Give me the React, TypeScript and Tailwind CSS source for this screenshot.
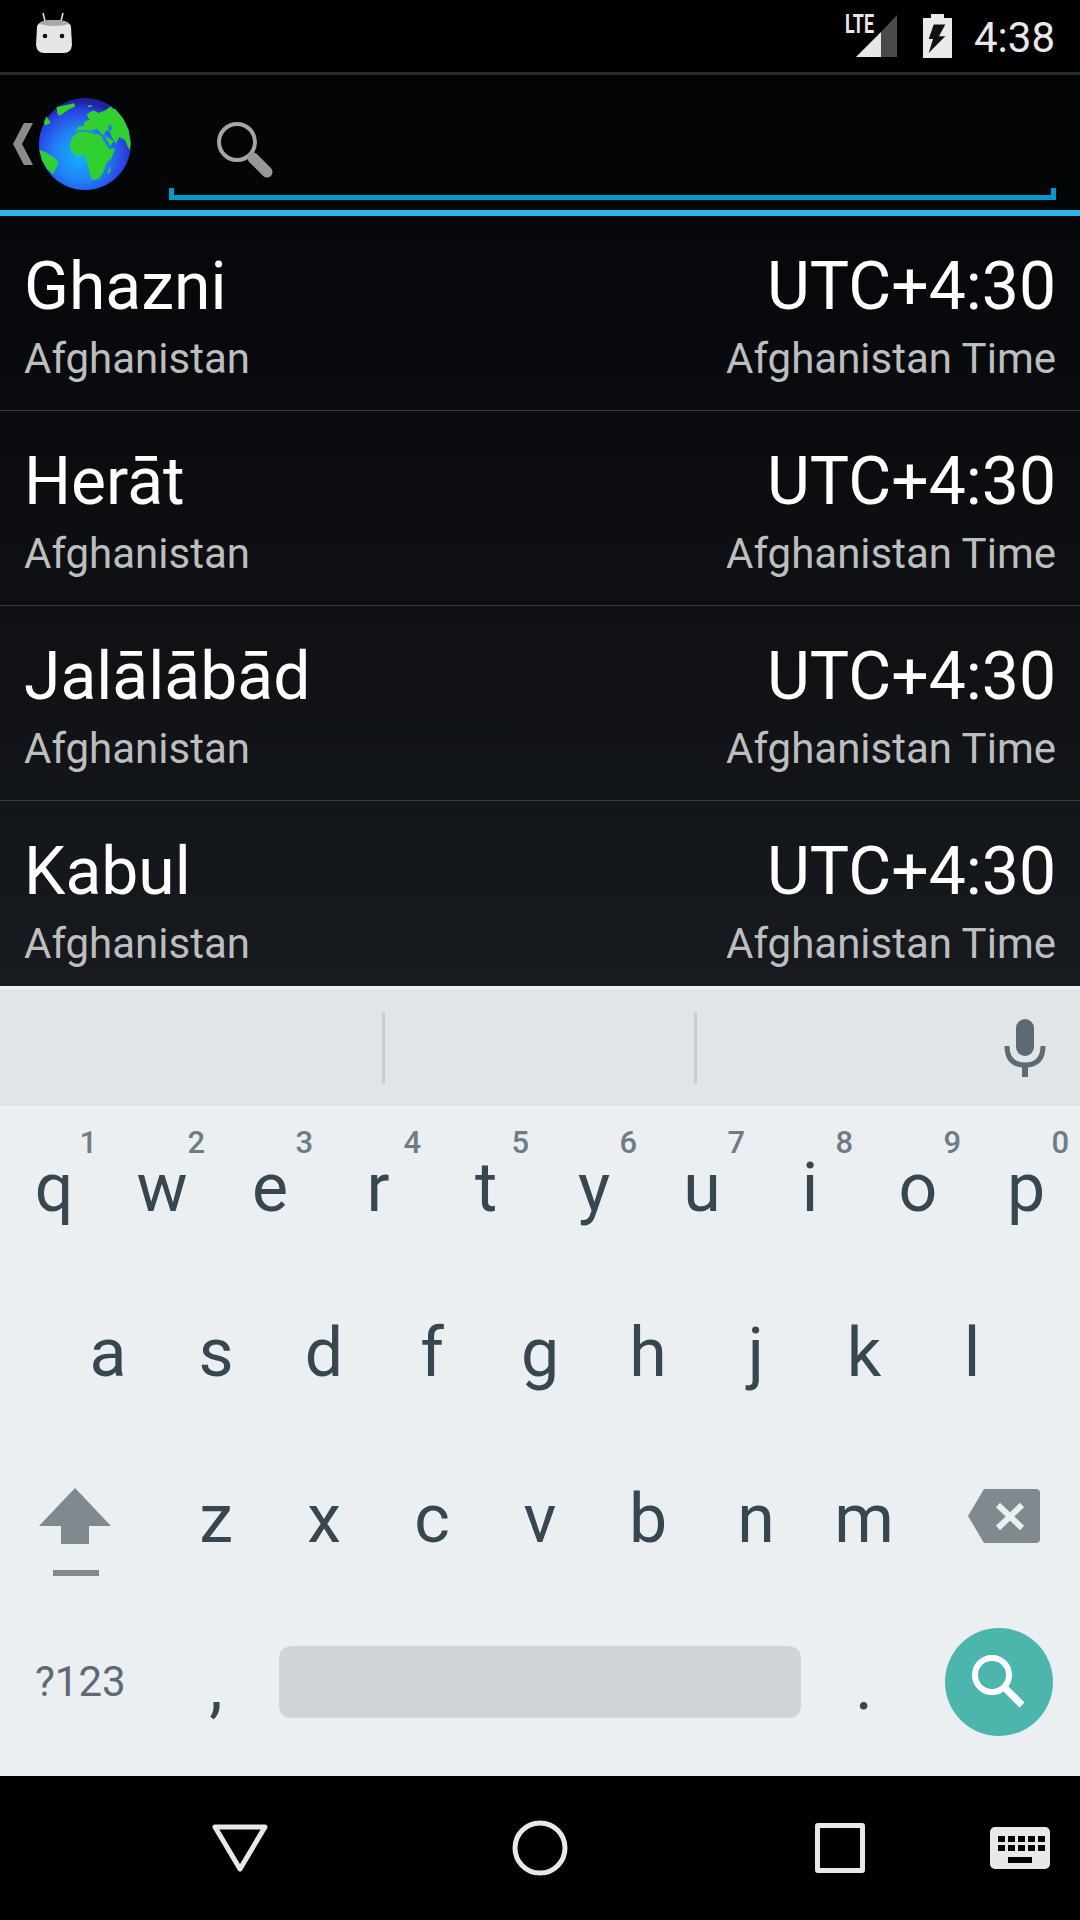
const sans = 'font-["Roboto",sans-serif]';

const cities = ['Ghazni', 'Herāt', 'Jalālābād', 'Kabul'];

const rowOne = [
  ['q', '1'],
  ['w', '2'],
  ['e', '3'],
  ['r', '4'],
  ['t', '5'],
  ['y', '6'],
  ['u', '7'],
  ['i', '8'],
  ['o', '9'],
  ['p', '0'],
];

function Key({ label, hint }: { label: string; hint?: string }) {
  return (
    <div className="relative flex w-[108px] items-center justify-center pb-[13px] text-[68px] leading-none text-[#37474f]">
      {hint && (
        <span className="absolute top-[14px] right-[11px] text-[31px] font-medium leading-none text-[#6f7c83]">{hint}</span>
      )}
      {label}
    </div>
  );
}

function Globe() {
  return (
    <svg viewBox="117 293 276 276" className="ml-[6px] h-[92px] w-[92px] shrink-0">
      <defs>
        <radialGradient id="sea" cx="45%" cy="62%" r="58%">
          <stop offset="0%" stopColor="#12b4ff" />
          <stop offset="50%" stopColor="#2080f5" />
          <stop offset="85%" stopColor="#2a40e0" />
          <stop offset="100%" stopColor="#2020a0" />
        </radialGradient>
      </defs>
      <circle cx="255" cy="431" r="138" fill="url(#sea)" />
      <g fill="#30d030">
        <path d="M170 320 L222 309 L226 318 L205 328 L180 346 L172 340 Z" />
        <path d="M132 364 L140 348 L152 368 L135 376 Z" />
        <path d="M262 316 L276 314 L274 320 L264 320 Z" />
        <path d="M318 328 L332 318 L340 326 L326 332 Z" />
        <path d="M228 392 L236 378 L250 378 L255 362 L268 360 L260 342 L280 330 L295 338 L320 328 L345 325 L370 355 L386 390 L392 430 L388 450 L375 420 L358 410 L348 430 L335 410 L330 395 L322 388 L312 400 L330 438 L342 422 L304 400 L290 385 L270 392 L250 388 Z" />
        <path d="M209 438 L216 412 L234 396 L262 394 L280 400 L302 404 L310 420 L328 446 L346 444 L334 474 L318 490 L310 516 L296 536 L276 538 L268 516 L262 486 L254 464 L232 466 L216 456 Z" />
        <path d="M322 520 L330 496 L332 512 L326 520 Z" />
        <path d="M118 448 L136 456 L160 470 L176 484 L168 504 L160 522 L142 506 L126 480 Z" />
      </g>
      <ellipse cx="330" cy="382" rx="5" ry="9" fill="#2a70f0" />
    </svg>
  );
}

function Row({ city }: { city: string }) {
  return (
    <div className="flex h-[195px] shrink-0 items-start justify-between border-b border-[#3a3d40] pl-[24px] pr-[24px] pt-[39px] last:border-b-0">
      <div className="flex flex-col">
        <span className="text-[66px] leading-[64px] text-white">{city}</span>
        <span className="mt-[16px] text-[42px] leading-[48px] text-[#bdbebf]">Afghanistan</span>
      </div>
      <div className="flex flex-col items-end">
        <span className="text-[66px] leading-[64px] text-white">UTC+4:30</span>
        <span className="mt-[16px] text-[42px] leading-[48px] text-[#bdbebf]">Afghanistan Time</span>
      </div>
    </div>
  );
}

export default function App() {
  return (
    <div className={`flex h-[1920px] w-[1080px] flex-col overflow-hidden bg-black ${sans}`}>
      {/* status bar */}
      <div className="flex h-[72px] shrink-0 items-center justify-between pl-[36px] pr-[25px]">
        <svg viewBox="0 0 36 42" className="mb-[4px] h-[42px] w-[36px]">
          <path d="M7 0 L9 8 M27 0 L25 8" stroke="#e8e8e8" strokeWidth="1.5" />
          <path d="M1 14 Q2 7 18 7 Q34 7 35 14 L36 32 Q35 40 28 40 L8 40 Q1 40 0 32 Z" fill="#e6e6e6" />
          <path d="M3 11 Q5 7 18 7 Q31 7 33 11 Q25 13 18 13 Q11 13 3 11 Z" fill="#a8a8a8" />
          <circle cx="9" cy="23" r="2.3" fill="#111" />
          <circle cx="26" cy="23" r="2.3" fill="#111" />
        </svg>
        <div className="flex items-center">
          <div className="relative h-[42px] w-[52px]">
            <span className="absolute -top-[3px] left-0 origin-top-left scale-x-[0.72] text-[25px] font-bold leading-[26px] text-[#e8e8e8]">LTE</span>
            <svg viewBox="0 0 41 42" className="absolute top-0 left-[11px] h-[42px] w-[41px]">
              <path d="M25 42 L41 42 L41 0 L25 17 Z" fill="#4a4a4a" />
              <path d="M0 42 L25 17 L25 42 Z" fill="#e6e6e6" />
            </svg>
          </div>
          <svg viewBox="0 0 29 44" className="ml-[26px] h-[44px] w-[29px]">
            <path d="M0 4 L8 4 L8 0 L21 0 L21 4 L29 4 L29 44 L0 44 Z" fill="#eaeaea" />
            <path d="M10.7 10.6 L22.3 10.6 L16 22.3 L22.3 22.3 L5.7 39 L10 25 L5.7 25 Z" fill="#111" />
          </svg>
          <span className="ml-[22px] mt-[3px] text-[42px] leading-none text-[#e8e8e8]">4:38</span>
        </div>
      </div>
      <div className="h-[3px] shrink-0 bg-[#2a2a2a]" />

      {/* search header */}
      <div className="flex h-[135px] shrink-0 bg-[#040506]">
        <div className="flex w-[169px] items-center pl-[13px] pt-[3px]">
          <svg viewBox="0 0 20 42" className="h-[42px] w-[20px] shrink-0">
            <path d="M11 0 L20 0 L9 21 L20 42 L11 42 L0 21 Z" fill="#8c8c8c" />
          </svg>
          <Globe />
        </div>
        <div className="flex flex-1 flex-col pr-[24px]">
          <div className="flex-1 pl-[48px] pt-[47px]">
            <svg viewBox="0 0 56 56" className="h-[56px] w-[56px]" fill="none">
              <circle cx="20" cy="20" r="18" stroke="#a6a6a6" strokeWidth="4" />
              <path d="M36 36 L50 50" stroke="#989898" strokeWidth="11" strokeLinecap="round" />
            </svg>
          </div>
          <div className="mb-[10px] h-[12px] border-x-[5px] border-b-[5px] border-[#0499cc]" />
        </div>
      </div>
      <div className="h-[6px] shrink-0 bg-[#2eb4e6]" />

      {/* results */}
      <div className="flex h-[770px] shrink-0 flex-col overflow-hidden bg-gradient-to-b from-[#06070a] to-[#171a1e]">
        {cities.map((city) => (
          <Row key={city} city={city} />
        ))}
      </div>
      <div className="h-[3px] shrink-0 bg-[#eef1f4]" />

      {/* suggestion strip */}
      <div className="flex h-[117px] shrink-0 items-center bg-[#e2e5e8]">
        <div className="h-[72px] w-[385px] border-r-[3px] border-[#c8cccf]" />
        <div className="h-[72px] w-[312px] border-r-[3px] border-[#c8cccf]" />
        <div className="flex flex-1 justify-end pr-[34px]">
          <svg viewBox="0 0 42 58" className="h-[58px] w-[42px]">
            <rect x="12" y="0" width="18" height="37" rx="9" fill="#5d6a72" />
            <path d="M3 27 Q3 46 21 46 Q39 46 39 27" fill="none" stroke="#5d6a72" strokeWidth="5" />
            <rect x="18" y="44" width="6" height="14" fill="#5d6a72" />
          </svg>
        </div>
      </div>
      <div className="h-[3px] shrink-0 bg-[#f0f2f5]" />

      {/* keyboard */}
      <div className="flex h-[667px] shrink-0 flex-col bg-[#ebeff2]">
        <div className="flex h-[167px] pt-[4px]">
          {rowOne.map(([label, hint]) => (
            <Key key={label} label={label} hint={hint} />
          ))}
        </div>
        <div className="flex h-[166px] justify-center">
          {['a', 's', 'd', 'f', 'g', 'h', 'j', 'k', 'l'].map((k) => (
            <Key key={k} label={k} />
          ))}
        </div>
        <div className="flex h-[167px] items-stretch">
          <div className="flex w-[162px] items-center justify-center pr-[12px] pt-[13px]">
            <svg viewBox="0 0 72 88" className="h-[88px] w-[72px]">
              <path d="M36 0 L72 38 L50 38 L50 56 L22 56 L22 38 L0 38 Z" fill="#80898d" />
              <rect x="14" y="82" width="46" height="6" fill="#80898d" />
            </svg>
          </div>
          {['z', 'x', 'c', 'v', 'b', 'n', 'm'].map((k) => (
            <Key key={k} label={k} />
          ))}
          <div className="flex flex-1 items-center justify-center pl-[10px] pb-[19px]">
            <svg viewBox="0 0 72 54" className="h-[54px] w-[72px]">
              <path d="M16 0 L68 0 Q72 0 72 4 L72 50 Q72 54 68 54 L16 54 L0 27 Z" fill="#80898d" />
              <path d="M30 16 L54 39 M54 16 L30 39" stroke="#ebeff2" strokeWidth="6" />
            </svg>
          </div>
        </div>
        <div className="flex h-[167px] items-center pb-[21px]">
          <span className="w-[162px] pl-[35px] text-[42px] leading-none text-[#5d6a72]">?123</span>
          <div className="flex w-[108px] justify-center pt-[8px] text-[68px] leading-none text-[#37474f]">,</div>
          <div className="ml-[9px] h-[72px] w-[522px] rounded-[12px] bg-[#d0d4d7]" />
          <div className="ml-[9px] flex w-[108px] justify-center pt-[8px] text-[68px] leading-none text-[#37474f]">.</div>
          <div className="ml-[27px] flex h-[108px] w-[108px] items-center justify-center rounded-full bg-[#4db6ac]">
            <svg viewBox="0 0 54 54" className="h-[54px] w-[54px]" fill="none" stroke="#fff">
              <circle cx="20" cy="20" r="17" strokeWidth="6" />
              <path d="M32 32 L50 50" strokeWidth="7" />
            </svg>
          </div>
        </div>
      </div>

      {/* nav bar */}
      <div className="flex h-[144px] shrink-0 items-center bg-black">
        <svg viewBox="0 0 56 48" className="ml-[212px] h-[48px] w-[56px]" fill="none">
          <path d="M3 3 L53 3 L28 45 Z" stroke="#e8e8e8" strokeWidth="5" strokeLinejoin="round" />
        </svg>
        <svg viewBox="0 0 56 56" className="ml-[244px] h-[56px] w-[56px]" fill="none">
          <circle cx="28" cy="28" r="25" stroke="#e8e8e8" strokeWidth="5" />
        </svg>
        <div className="ml-[247px] h-[50px] w-[50px] rounded-[3px] border-[5px] border-[#e8e8e8]" />
        <svg viewBox="0 0 60 42" className="ml-[125px] h-[42px] w-[60px]">
          <rect width="60" height="42" rx="5" fill="#e8e8e8" />
          <g fill="#000">
            {[5, 15, 25, 35, 45].map((x) => (
              <rect key={x} x={x + 3} y="9" width="7" height="6" />
            ))}
            {[5, 15, 25, 35, 45].map((x) => (
              <rect key={x} x={x + 3} y="18" width="7" height="6" />
            ))}
            <rect x="18" y="30" width="24" height="6" />
          </g>
        </svg>
      </div>
    </div>
  );
}
